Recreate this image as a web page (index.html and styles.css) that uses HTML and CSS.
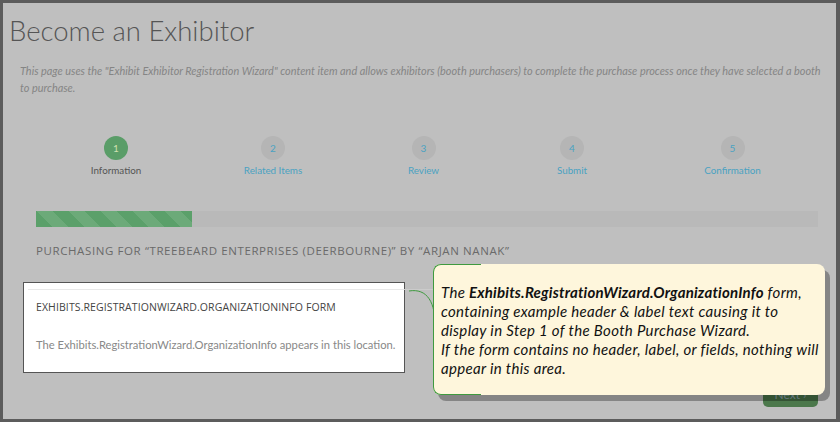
FILE: index.html
```html
<!DOCTYPE html>
<html>
<head>
<meta charset="utf-8">
<link rel="stylesheet" href="styles.css">
</head>
<body>
<div class="frame">
  <h1 class="title">Become an Exhibitor</h1>
  <p class="desc">This page uses the "Exhibit Exhibitor Registration Wizard" content item and allows exhibitors (booth purchasers) to complete the purchase process once they have selected a booth to purchase.</p>

  <div class="steps">
    <div class="step active"><span class="num">1</span><span class="label">Information</span></div>
    <div class="step"><span class="num">2</span><span class="label">Related Items</span></div>
    <div class="step"><span class="num">3</span><span class="label">Review</span></div>
    <div class="step"><span class="num">4</span><span class="label">Submit</span></div>
    <div class="step"><span class="num">5</span><span class="label">Confirmation</span></div>
  </div>

  <div class="progress"><div class="fill" style="width:156px"></div></div>

  <div class="purchasing">Purchasing for “Treebeard Enterprises (Deerbourne)” by “Arjan Nanak”</div>

  <div class="form-box">
    <div class="rule"></div>
    <div class="form-head">Exhibits.RegistrationWizard.OrganizationInfo Form</div>
    <div class="form-text">The Exhibits.RegistrationWizard.OrganizationInfo appears in this location.</div>
  </div>

  <div class="actions"><button class="next">Next <span class="chev">›</span></button></div>

  <svg class="connector" width="40" height="50" viewBox="0 0 40 50">
    <path d="M4 5 C 22 2, 31 16, 30 43" fill="none" stroke="#3f9a3f" stroke-width="1"/>
  </svg>

  <div class="callout">
    <p>The <b>Exhibits.RegistrationWizard.OrganizationInfo</b> form, containing example header &amp; label text causing it to display in Step 1 of the Booth Purchase Wizard.<br>If the form contains no header, label, or fields, nothing will appear in this area.</p>
  </div>
</div>
</body>
</html>
```

FILE: styles.css
```css
* { box-sizing: border-box; }
html, body { margin: 0; padding: 0; }
body { width: 840px; height: 422px; overflow: hidden; font-family: Lato, "Open Sans", sans-serif; }

.frame {
  position: relative;
  width: 840px;
  height: 422px;
  background: #bfbfbf;
  border-style: solid;
  border-color: #5c5c5c;
  border-width: 3px 4px 3px 3px;
  display: flex;
  flex-direction: column;
}

.title {
  margin: 10px 0 0 6px;
  font-family: Lato, sans-serif;
  font-weight: 300;
  font-size: 27.5px;
  line-height: 36px;
  color: #555;
}

.desc {
  margin: 13px 12px 0 17px;
  font-family: Lato, sans-serif;
  font-style: italic;
  font-size: 10.9px;
  line-height: 17px;
  color: #858585;
}

.steps {
  margin: 40px 0 0 33px;
  display: grid;
  grid-template-columns: 160px 154px 147px 150px 171px;
}
.step {
  display: flex;
  flex-direction: column;
  align-items: center;
}
.num {
  width: 24px;
  height: 24px;
  border-radius: 50%;
  background: #b5b5b5;
  color: #4aa2c2;
  font-size: 10px;
  display: flex;
  align-items: center;
  justify-content: center;
}
.label {
  margin-top: 4px;
  font-size: 9.8px;
  color: #4aa2c2;
}
.step.active .num { background: #5a9d68; color: #cfe0b0; }
.step.active .label { color: #555; }

.progress {
  margin: 35px 18px 0 33px;
  height: 16px;
  background: #b9b9b9;
}
.progress .fill {
  height: 100%;
  background-color: #5ba06a;
  background-image: linear-gradient(45deg, rgba(255,255,255,.1) 25%, transparent 25%, transparent 50%, rgba(255,255,255,.1) 50%, rgba(255,255,255,.1) 75%, transparent 75%, transparent);
  background-size: 32px 32px;
}

.purchasing {
  margin: 16px 0 0 33px;
  font-family: "Open Sans", Lato, sans-serif;
  text-transform: uppercase;
  font-size: 11.5px;
  letter-spacing: 0.6px;
  color: #6a6a6a;
}

.form-box {
  position: relative;
  margin: 24px 0 0 20px;
  width: 382px;
  height: 91px;
  background: #fff;
  border: 1px solid #555;
  padding: 17px 0 0 12px;
}
.rule {
  position: absolute;
  left: 4px;
  top: 6px;
  width: 408px;
  height: 1px;
  background: linear-gradient(to right, #e9e9e9 0 376px, #cbcbcb 376px);
}
.form-head {
  font-family: "Open Sans", Lato, sans-serif;
  font-size: 10.5px;
  text-transform: uppercase;
  color: #444;
  letter-spacing: 0.1px;
}
.form-text {
  margin-top: 24px;
  font-size: 11.2px;
  color: #888;
}

.actions {
  display: flex;
  justify-content: flex-end;
  margin: 7px 18px 0 0;
}
.next {
  width: 55px;
  height: 27px;
  border: none;
  border-radius: 5px;
  background: #4b784b;
  color: #8fa9b5;
  font-family: Lato, sans-serif;
  font-size: 12px;
  padding-top: 3px;
}

.connector {
  position: absolute;
  left: 402px;
  top: 283px;
}

.callout {
  position: absolute;
  left: 430px;
  top: 261px;
  width: 392px;
  height: 131px;
  background: #fef6dc;
  border-radius: 8px;
  box-shadow: 5px 6px 0 rgba(0,0,0,0.3);
  padding: 19px 2px 0 8px;
}
.callout::before {
  content: "";
  position: absolute;
  left: 0;
  top: 0;
  bottom: 0;
  width: 47px;
  border: 1px solid #3f9a3f;
  border-right: none;
  border-radius: 8px 0 0 8px;
}
.callout p {
  margin: 0;
  font-family: Lato, sans-serif;
  font-style: italic;
  font-size: 15px;
  line-height: 19px;
  letter-spacing: 0.33px;
  color: #111;
}
.callout b { font-weight: 700; letter-spacing: 0.2px; }
```
